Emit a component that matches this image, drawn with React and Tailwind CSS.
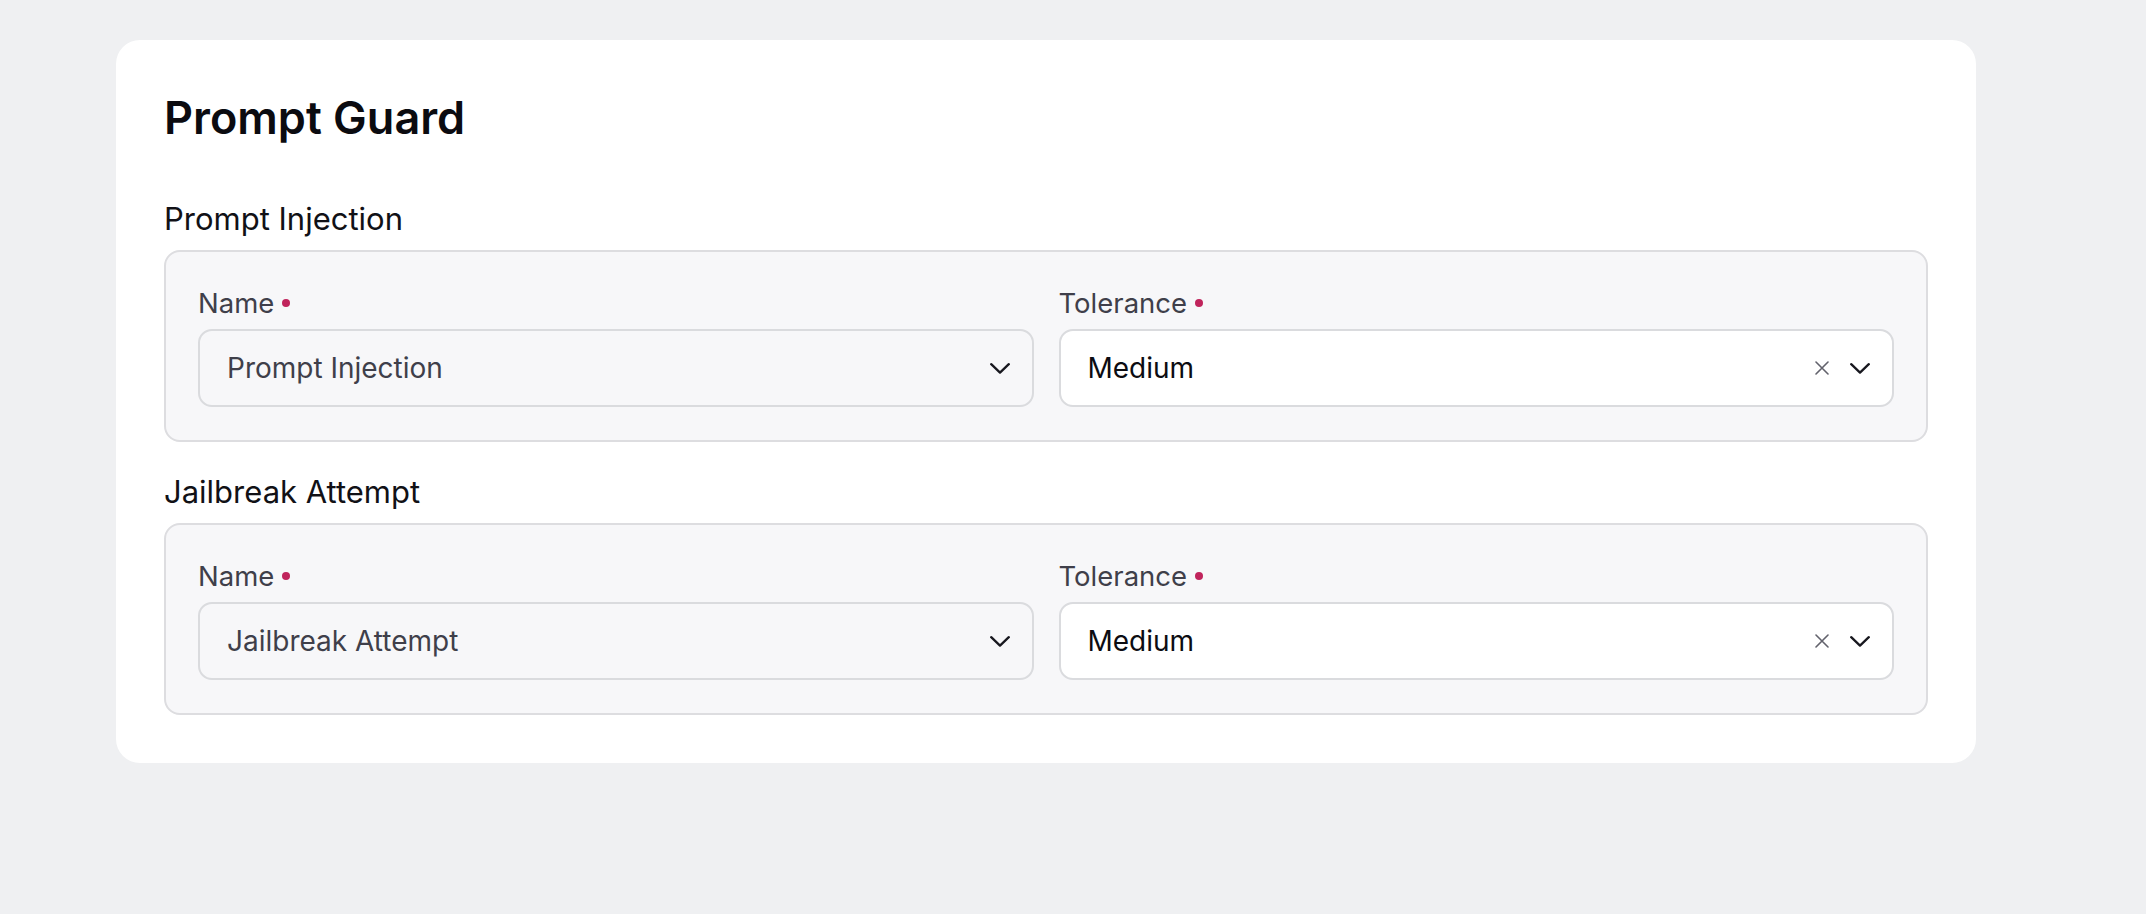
import React from 'react';

const Chevron = () => (
  <svg width="20" height="11" viewBox="0 0 20 11" fill="none" className="shrink-0">
    <path d="M1.2 1.2 10 9.6l8.8-8.4" stroke="#18181f" strokeWidth="2.3" strokeLinecap="round" strokeLinejoin="round" />
  </svg>
);

const Clear = () => (
  <svg width="14" height="14" viewBox="0 0 14 14" fill="none" className="shrink-0">
    <path d="M1 1l12 12M13 1 1 13" stroke="#62626c" strokeWidth="1.6" strokeLinecap="round" />
  </svg>
);

const FieldLabel = ({ children }) => (
  <div className="flex items-center gap-[8px] text-[27.5px] leading-[34px] text-[#3f3f4a]">
    <span>{children}</span>
    <span className="h-[8px] w-[8px] rounded-full bg-[#c0245c]" />
  </div>
);

const Guard = ({ title }) => (
  <div>
    <h2 className="mt-[49px] text-[31px] leading-[44px] text-[#111116]">{title}</h2>
    <div className="mt-[9px] grid grid-cols-2 gap-x-[25px] rounded-[16px] border-2 border-[#dddde0] bg-[#f7f7f9] px-[32px] pt-[34px] pb-[33px]">
      <div>
        <FieldLabel>Name</FieldLabel>
        <div className="mt-[9px] flex h-[78px] items-center justify-between rounded-[14px] border-2 border-[#dadbde] bg-[#f7f7f9] pl-[27px] pr-[22px]">
          <span className="text-[28px] text-[#3f3f4a]">{title}</span>
          <Chevron />
        </div>
      </div>
      <div>
        <FieldLabel>Tolerance</FieldLabel>
        <div className="mt-[9px] flex h-[78px] items-center rounded-[14px] border-2 border-[#dadbde] bg-white pl-[27px] pr-[22px]">
          <span className="flex-1 text-[28px] text-[#0c0c12]">Medium</span>
          <div className="flex items-center gap-[21px]">
            <Clear />
            <Chevron />
          </div>
        </div>
      </div>
    </div>
  </div>
);

export default function App() {
  return (
    <div className="min-h-screen bg-[#eff0f2] pl-[116px] pt-[40px] font-['Inter','Liberation_Sans',sans-serif]">
      <div className="w-[1860px] rounded-3xl bg-white px-[48px] pb-[48px] pt-[48px]">
        <h1 className="text-[45px] font-semibold leading-[60px] text-[#0b0b10]">Prompt Guard</h1>
        <Guard title="Prompt Injection" />
        <div className="-mt-[21px]">
          <Guard title="Jailbreak Attempt" />
        </div>
      </div>
    </div>
  );
}
